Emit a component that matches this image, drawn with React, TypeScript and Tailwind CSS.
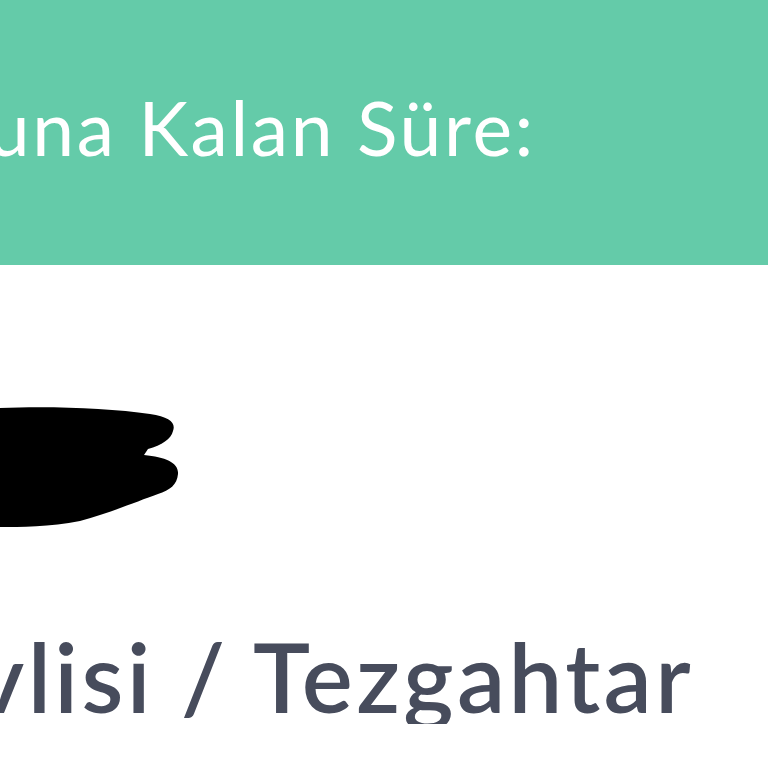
export default function App() {
  return (
    <div className="h-[768px] w-[768px] overflow-hidden bg-white font-['Lato','Liberation_Sans',sans-serif]">
      <div className="h-[265px] bg-[#64cba9] pt-[90px]">
        <div className="flex w-[536px] justify-end overflow-hidden whitespace-nowrap">
          <span className="text-[75px] leading-none font-normal tracking-[0.035em] text-white">
            Sonuna Kalan Süre:
          </span>
        </div>
      </div>

      <div className="pt-[140px]">
        <svg width="182" height="126" viewBox="0 0 182 126" className="block">
          <path
            d="M0 3 C50 1 110 3 150 9 C170 12 176 18 173 26 C171 34 162 40 148 44 L144 50 C166 52 179 58 178 69 C177 80 170 85 158 89 C138 96 110 108 80 116 C50 122 20 122 0 122 Z"
            fill="#000"
          />
        </svg>
      </div>

      <div className="mt-[97px] flex w-[694px] justify-end overflow-hidden whitespace-nowrap">
        <span className="text-[96px] leading-none font-semibold tracking-[0.035em] text-[#474c5c]">
          Sevlisi / Tezgahtar
        </span>
      </div>
    </div>
  );
}
